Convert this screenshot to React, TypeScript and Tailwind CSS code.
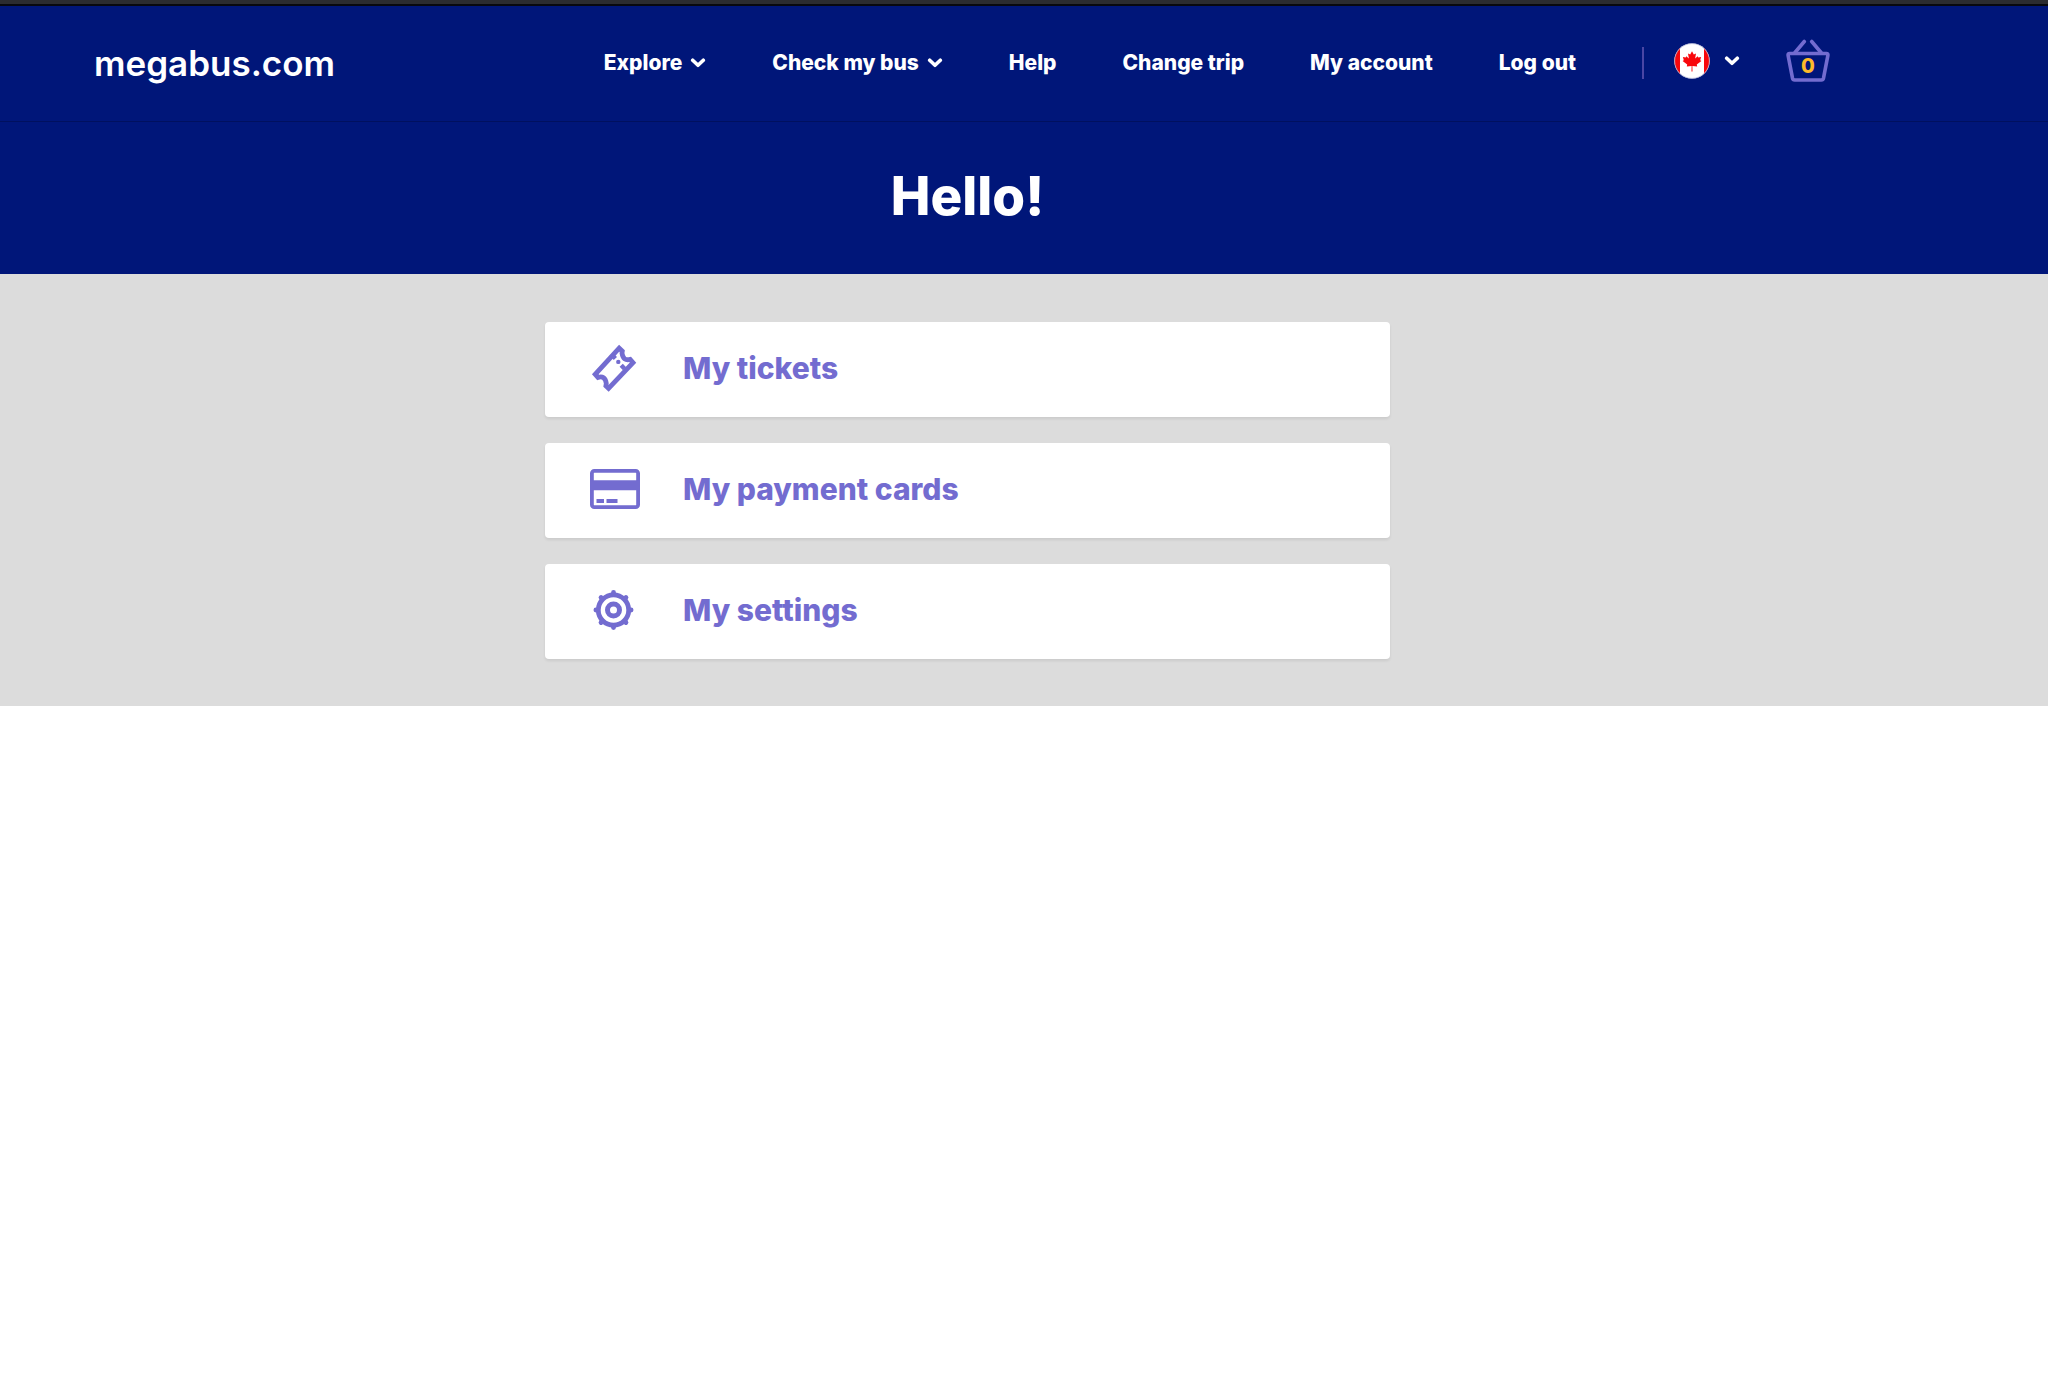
import React from 'react';

const navItems = [
  { label: "Explore", hasMenu: true },
  { label: "Check my bus", hasMenu: true },
  { label: "Help", hasMenu: false },
  { label: "Change trip", hasMenu: false },
  { label: "My account", hasMenu: false },
  { label: "Log out", hasMenu: false },
];

const Chevron = () => (
  <svg width="16" height="10" viewBox="0 0 16 10" fill="none" stroke="currentColor" strokeWidth="3.6" strokeLinecap="round" strokeLinejoin="round" aria-hidden="true">
    <path d="M2.7 2.2 8 7.3 13.3 2.2" />
  </svg>
);

const CanadaFlag = () => (
  <svg width="36" height="36" viewBox="0 0 36 36" aria-hidden="true">
    <defs>
      <clipPath id="flag-circle">
        <circle cx="18" cy="18" r="17.6" />
      </clipPath>
    </defs>
    <g clipPath="url(#flag-circle)">
      <rect width="36" height="36" fill="#fff" />
      <rect width="6" height="36" fill="#f8070b" />
      <rect x="30" width="6" height="36" fill="#f8070b" />
    </g>
    <path
      d="M18 8.2 16.2 11.6 14 10.6 14.9 15.6 12.3 13.2 11.7 14.6 8.9 14.1 9.8 17.2 8.6 18 13.2 21.6 12.8 23.6 17.6 23 17.5 28.4H18.5L18.4 23 23.2 23.6 22.8 21.6 27.4 18 26.2 17.2 27.1 14.1 24.3 14.6 23.7 13.2 21.1 15.6 22 10.6 19.8 11.6Z"
      fill="#f8070b"
    />
    <circle cx="18" cy="18" r="17.4" fill="none" stroke="#b9bcdb" strokeWidth="0.8" />
  </svg>
);

const BasketIcon = () => (
  <svg width="44" height="44" viewBox="0 0 44 44" fill="none" stroke="#736cd0" strokeWidth="3.6" strokeLinecap="round" strokeLinejoin="round" aria-hidden="true">
    <path d="M3.6 14.5H40.4Q42.2 14.5 41.9 16.3L37.5 39.2Q37.1 41 35.3 41H8.7Q6.9 41 6.5 39.2L2.1 16.3Q1.8 14.5 3.6 14.5Z" />
    <path d="M9 13.5 18.3 2.5M35 13.5 25.7 2.5" />
  </svg>
);

const TicketIcon = () => (
  <svg width="50" height="50" viewBox="0 0 50 50" fill="none" stroke="currentColor" strokeWidth="4.8" aria-hidden="true">
    <path d="M29.2 5.2 5.2 31.3 8 34.4Q15 32.2 16.3 40.3L15.9 42.8 18.6 45.4 43 19.6 40.2 16.4Q33.2 18.3 32 10.2L32.3 8.2Z" />
    <path d="M22.2 12.2 25.4 15.6M31.2 22.2 34.6 25.8" strokeWidth="4.4" />
    <circle cx="28.3" cy="18.9" r="2.2" fill="currentColor" stroke="none" />
  </svg>
);

const CardIcon = () => (
  <svg width="50" height="50" viewBox="0 0 50 50" fill="none" stroke="currentColor" strokeWidth="3.8" aria-hidden="true">
    <rect x="1.9" y="6.9" width="46.2" height="36.2" rx="2.4" />
    <path d="M2 21.3H48" strokeWidth="10" />
    <path d="M6.5 37H14M16.5 37H27.5" strokeWidth="4" />
  </svg>
);

const cogAngles = [0, 45, 90, 135, 180, 225, 270, 315];

const SettingsIcon = () => (
  <svg width="50" height="50" viewBox="0 0 50 50" fill="none" stroke="currentColor" aria-hidden="true">
    <circle cx="23.5" cy="25" r="15.2" strokeWidth="4.8" />
    <circle cx="23.5" cy="25" r="6" strokeWidth="5" />
    {cogAngles.map((angle) => (
      <path key={angle} d="M23.5 9V7.4" strokeWidth="4.8" strokeLinecap="round" transform={`rotate(${angle} 23.5 25)`} />
    ))}
  </svg>
);

const accountLinks = [
  { title: "My tickets", icon: <TicketIcon /> },
  { title: "My payment cards", icon: <CardIcon /> },
  { title: "My settings", icon: <SettingsIcon /> },
];

const Header = () => {
  return (
    <header className="flex items-center justify-between bg-[#001679] pt-[33px] pb-[34px] pl-[94px] pr-[218px] border-b border-[#00105f] text-white">
      <a href="#" className="text-[35px] leading-10 font-semibold">megabus.com</a>
      <div className="flex items-center">
        <nav className="flex items-center gap-[66px]">
          {navItems.map((item) =>
            item.hasMenu ? (
              <button key={item.label} type="button" className="flex items-center gap-2 text-[21px] leading-7 font-extrabold whitespace-nowrap">
                {item.label}
                <Chevron />
              </button>
            ) : (
              <a key={item.label} href="#" className="text-[21px] leading-7 font-extrabold whitespace-nowrap">{item.label}</a>
            )
          )}
        </nav>
        <div className="ml-[66px] h-8 w-0.5 bg-[#4a46a4]" />
        <button type="button" aria-label="Country: Canada" className="ml-[30px] mb-1 flex items-center gap-3.5">
          <CanadaFlag />
          <Chevron />
        </button>
        <a href="#" aria-label="Basket" className="relative ml-[46px] mb-1">
          <BasketIcon />
          <span className="absolute inset-x-0 top-[15px] text-center text-xl leading-6 font-extrabold text-[#fdb92a]">0</span>
        </a>
      </div>
    </header>
  );
};

const App = () => {
  return (
    <div className="min-h-screen bg-white font-['Inter',sans-serif]">
      <div className="h-1.5 bg-[#2b2c30] border-b-2 border-[#08090f]" />
      <Header />
      <main>
        <div className="bg-[#001679] pt-[42px] pb-[46px] pr-[113px] text-center">
          <h1 className="text-[53px] leading-16 font-extrabold text-white">Hello!</h1>
        </div>
        <section className="bg-[#dcdcdc] pt-12 pb-[47px] pr-[113px]">
          <ul className="mx-auto flex max-w-[845px] flex-col gap-[26px]">
            {accountLinks.map((link) => (
              <li key={link.title}>
                <a href="#" className="flex h-[95px] items-center gap-[43px] rounded-sm bg-white pb-[3px] pl-[45px] text-[#736cd0] shadow-[0_2px_3px_rgba(0,0,0,0.08)]">
                  {link.icon}
                  <span className="text-[30px] leading-10 font-extrabold">{link.title}</span>
                </a>
              </li>
            ))}
          </ul>
        </section>
      </main>
    </div>
  );
};

export default App;
